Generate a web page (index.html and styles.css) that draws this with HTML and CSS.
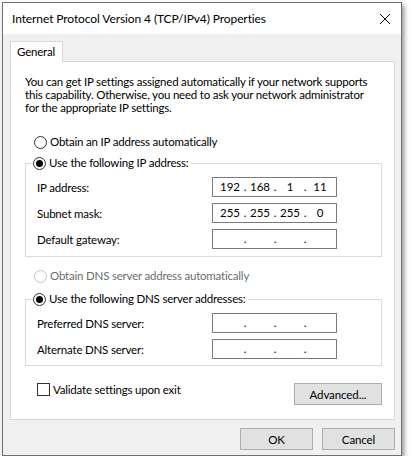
FILE: index.html
```html
<!DOCTYPE html>
<html>
<head>
<meta charset="utf-8">
<link rel="stylesheet" href="styles.css">
</head>
<body>
<div class="window">
  <div class="titlebar">
    <span class="title">Internet Protocol Version 4 (TCP/IPv4) Properties</span>
    <svg class="close" width="12" height="12" viewBox="0 0 12 12"><path d="M1 1 L11 11 M11 1 L1 11" stroke="#000" stroke-width="1" fill="none"/></svg>
  </div>
  <div class="body">
    <div class="tabs"><div class="tab">General</div></div>
    <div class="panel">
      <p class="intro">You can get IP settings assigned automatically if your network supports<br>this capability. Otherwise, you need to ask your network administrator<br>for the appropriate IP settings.</p>
      <div class="option first"><span class="radio"></span><span>Obtain an IP address automatically</span></div>
      <fieldset class="group">
        <legend><span class="radio checked"></span><span>Use the following IP address:</span></legend>
        <div class="row"><span class="label">IP address:</span><div class="ip"><span>192</span><i>.</i><span>168</span><i>.</i><span>1</span><i>.</i><span>11</span></div></div>
        <div class="row"><span class="label">Subnet mask:</span><div class="ip"><span>255</span><i>.</i><span>255</span><i>.</i><span>255</span><i>.</i><span>0</span></div></div>
        <div class="row"><span class="label">Default gateway:</span><div class="ip"><span></span><i>.</i><span></span><i>.</i><span></span><i>.</i><span></span></div></div>
      </fieldset>
      <div class="option dns disabled"><span class="radio"></span><span>Obtain DNS server address automatically</span></div>
      <fieldset class="group dnsgroup">
        <legend><span class="radio checked"></span><span>Use the following DNS server addresses:</span></legend>
        <div class="row"><span class="label">Preferred DNS server:</span><div class="ip"><span></span><i>.</i><span></span><i>.</i><span></span><i>.</i><span></span></div></div>
        <div class="row"><span class="label">Alternate DNS server:</span><div class="ip"><span></span><i>.</i><span></span><i>.</i><span></span><i>.</i><span></span></div></div>
      </fieldset>
      <div class="bottom">
        <div class="check"><span class="box"></span><span>Validate settings upon exit</span></div>
        <button class="btn adv">Advanced...</button>
      </div>
    </div>
    <div class="footer">
      <button class="btn">OK</button>
      <button class="btn">Cancel</button>
    </div>
  </div>
</div>
</body>
</html>
```
FILE: styles.css
```css
* { box-sizing: border-box; }
html, body { margin: 0; padding: 0; background: #fff; }
body {
  font-family: Lato, "Noto Sans", sans-serif;
  font-size: 11.5px;
  letter-spacing: -0.2px;
  color: #000;
}
.window {
  margin: 2px 0 0 2px;
  width: 400px;
  height: 454px;
  border: 1px solid #707070;
  box-shadow: 2px 3px 5px rgba(0,0,0,0.45);
  display: flex;
  flex-direction: column;
  background: #f0f0f0;
}
.titlebar {
  height: 31px;
  background: #fff;
  display: flex;
  align-items: center;
  justify-content: space-between;
  padding: 0 9px 0 9px;
}
.title {
  font-size: 12px;
  letter-spacing: -0.1px;
  line-height: 16px;
  padding-top: 1px;
  white-space: nowrap;
}
.close { margin-right: 1px; margin-top: 1px; }
.body {
  flex: 1;
  padding: 7px 6px 0 7px;
  display: flex;
  flex-direction: column;
}
.tabs { display: flex; height: 21px; position: relative; z-index: 1; }
.tab {
  width: 53px;
  height: 21px;
  background: #fff;
  border: 1px solid #d9d9d9;
  border-bottom: none;
  padding-left: 6px;
  line-height: 19px;
}
.panel {
  background: #fff;
  border: 1px solid #d9d9d9;
  height: 359px;
  margin-top: -1px;
  padding: 13px 12px 0 14px;
  display: flex;
  flex-direction: column;
}
.intro { margin: 0; line-height: 13px; white-space: nowrap; }
.option {
  display: flex;
  align-items: center;
  height: 16px;
  line-height: 16px;
  margin-left: 9px;
  white-space: nowrap;
}
.option.first { margin-top: 20px; }
.option.dns { margin-top: 11px; }
.disabled { color: #6d6d6d; }
.radio {
  width: 13px;
  height: 13px;
  border: 1px solid #333;
  border-radius: 50%;
  margin-right: 3px;
  display: inline-flex;
  align-items: center;
  justify-content: center;
  flex: none;
  background: #fff;
}
.radio.checked::after {
  content: "";
  width: 7px;
  height: 7px;
  border-radius: 50%;
  background: #000;
}
.disabled .radio { border-color: #c4c4c4; }
.group {
  margin: 5px 0 0 0;
  padding: 0 0 7px 0;
  border: 1px solid #dcdcdc;
  min-width: 0;
  width: 357px;
}
.dnsgroup { margin-top: 7px; padding-bottom: 6px; }
.group legend {
  display: flex;
  align-items: center;
  height: 16px;
  line-height: 16px;
  padding: 0 2px 0 0;
  margin-left: 7px;
  white-space: nowrap;
}
.row {
  display: flex;
  align-items: center;
  height: 20px;
  margin-top: 6px;
  padding-left: 11px;
}
.label { width: 175px; }
.ip {
  width: 125px;
  height: 20px;
  border: 1px solid #7a7a7a;
  padding: 0 3px 0 5px;
  display: grid;
  grid-template-columns: 24px 6px 24px 6px 24px 6px 24px;
  line-height: 18px;
  text-align: center;
  letter-spacing: 0;
}
.ip i { font-style: normal; }
.bottom {
  margin-top: 17px;
  display: flex;
  align-items: flex-start;
  justify-content: space-between;
  padding-left: 12px;
  width: 357px;
}
.check {
  display: flex;
  align-items: center;
  white-space: nowrap;
  height: 16px;
  margin-top: -2px;
}
.box {
  width: 13px;
  height: 13px;
  border: 1px solid #333;
  margin-right: 3px;
  background: #fff;
}
.btn {
  font-family: inherit;
  font-size: 11.5px;
  letter-spacing: -0.1px;
  color: #000;
  background: #e1e1e1;
  border: 1px solid #adadad;
  height: 22px;
  padding: 0;
  margin: 0;
}
.adv { width: 88px; }
.footer {
  margin-top: 8px;
  display: flex;
  justify-content: flex-end;
  gap: 9px;
}
.footer .btn { width: 73px; }
```
